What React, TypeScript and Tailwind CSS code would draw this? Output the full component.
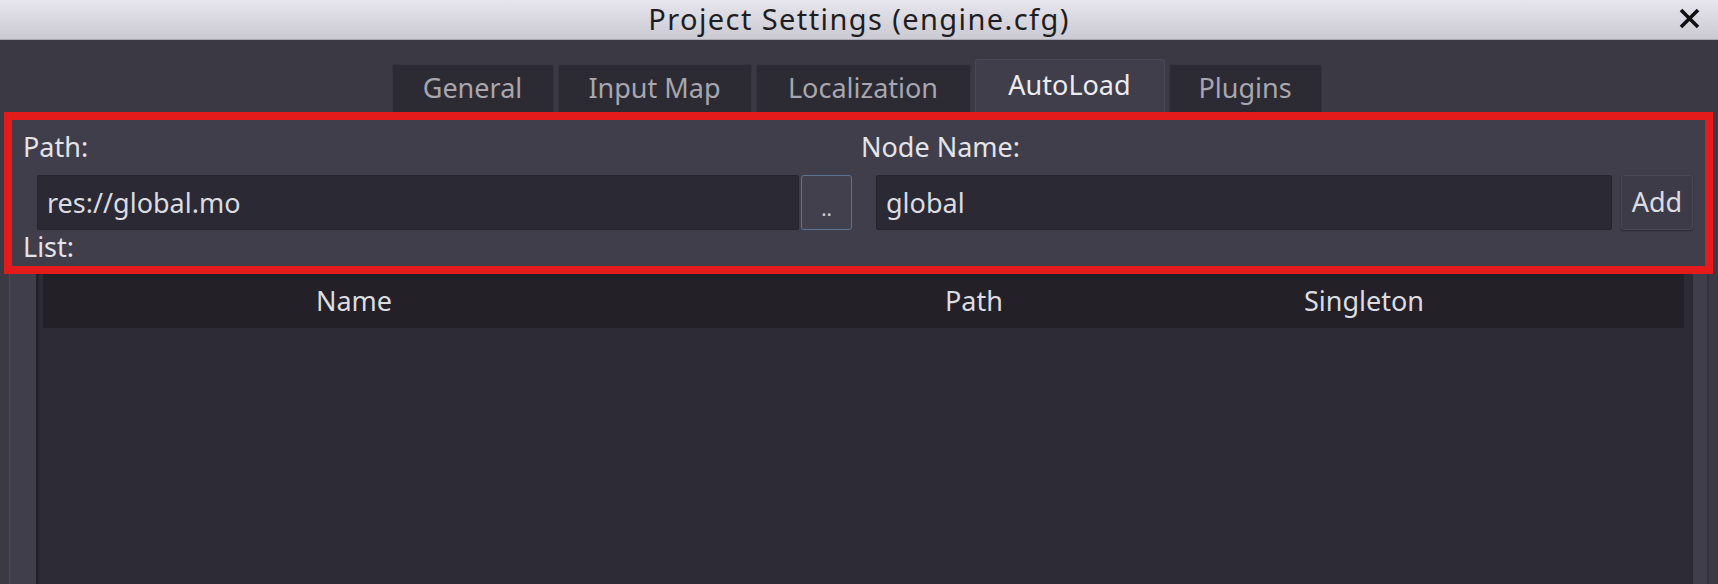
import { useState } from "react";

const tabs = [
  { name: "General", width: "w-[162px]" },
  { name: "Input Map", width: "w-[194px]" },
  { name: "Localization", width: "w-[215px]" },
  { name: "AutoLoad", width: "w-[190px]" },
  { name: "Plugins", width: "w-[153px]" },
];

const columns = ["Name", "Path", "Singleton", ""];

const App = () => {
  const [active] = useState("AutoLoad");

  return (
    <div className="relative flex h-[584px] w-full flex-col overflow-hidden bg-[#3b3944] font-['Noto_Sans',sans-serif] text-[27px]">
      {/* window title bar */}
      <div className="relative flex h-[40px] shrink-0 items-center justify-center border-b border-[#a9a8b0] bg-gradient-to-b from-[#e7e6ef] to-[#cbcad3]">
        <span className="pb-[2px] text-[29px] leading-[36px] tracking-[1.4px] text-[#1e1e22]">
          Project Settings (engine.cfg)
        </span>
        <button className="absolute right-[18px] top-[8px] h-[21px] w-[21px]">
          <svg viewBox="0 0 21 21" width="21" height="21">
            <path d="M2 2 L19 19 M19 2 L2 19" stroke="#111" strokeWidth="3.6" />
          </svg>
        </button>
      </div>

      {/* tabs */}
      <div className="flex h-[72px] shrink-0 items-end justify-center gap-[4px] pr-[5px]">
        {tabs.map((tab) =>
          tab.name === active ? (
            <div
              key={tab.name}
              className={`${tab.width} flex h-[53px] items-center justify-center rounded-t-[3px] border border-b-0 border-[#4b4957] bg-[#403e4b] pb-[2px] text-[#ececf0]`}
            >
              {tab.name}
            </div>
          ) : (
            <div
              key={tab.name}
              className={`${tab.width} flex h-[48px] items-center justify-center rounded-t-[3px] border border-b-0 border-[#36343e] bg-[#2c2a33] text-[#a8a6ae]`}
            >
              {tab.name}
            </div>
          )
        )}
      </div>

      {/* tab panel */}
      <div className="mx-[9px] flex flex-1 flex-col border-l border-r-2 border-l-[#4b4957] border-r-[#34323c] bg-[#403e4b] pl-[13px] pr-[14px] pt-[16px] text-[#e4e4e8]">
        <div className="grid grid-cols-[829px_1fr] gap-x-[9px]">
          <div className="flex flex-col">
            <span className="leading-[37px]">Path:</span>
            <div className="ml-[14px] mt-[10px] flex h-[55px] gap-[2px]">
              <input
                readOnly
                value="res://global.mo"
                className="h-full min-w-0 flex-1 rounded-[2px] border border-[#25232b] bg-[#2b2933] px-[9px] text-[#dcdce0] outline-none"
              />
              <button className="flex h-full w-[51px] items-end justify-center rounded-[3px] border border-[#5a7394] bg-[#42404d] pb-[10px] text-[20px] leading-none text-[#cfcfd4]">
                ..
              </button>
            </div>
          </div>
          <div className="flex flex-col">
            <span className="leading-[37px]">Node Name:</span>
            <div className="ml-[15px] mt-[10px] flex h-[55px] gap-[9px]">
              <input
                readOnly
                value="global"
                className="h-full min-w-0 flex-1 rounded-[2px] border border-[#25232b] bg-[#2b2933] px-[9px] text-[#dcdce0] outline-none"
              />
              <button className="flex h-full w-[72px] items-center justify-center rounded-[3px] border border-[#4a4856] bg-[#3d3b48] text-[#dcdce0] shadow-[0_1px_2px_rgba(0,0,0,0.35)]">
                Add
              </button>
            </div>
          </div>
        </div>

        <span className="mt-[2px] leading-[30px]">List:</span>

        {/* autoload tree */}
        <div className="ml-[13px] mt-[5px] flex-1 border-l border-[#25232a] bg-[#2d2b35] pb-[7px] pl-[6px] pr-[9px] pt-[7px] shadow-[inset_1px_1px_2px_rgba(0,0,0,0.4)]">
          <div className="grid h-[54px] grid-cols-[622px_618px_162px_1fr] items-center bg-[#232127] text-[#dcdce0]">
            {columns.map((col, i) => (
              <span key={i} className="text-center">
                {col}
              </span>
            ))}
          </div>
        </div>
      </div>

      {/* highlight frame */}
      <div className="pointer-events-none absolute left-[4px] top-[112px] h-[162px] w-[1709px] border-[8px] border-[#e31b1b]" />
    </div>
  );
};

export default App;
